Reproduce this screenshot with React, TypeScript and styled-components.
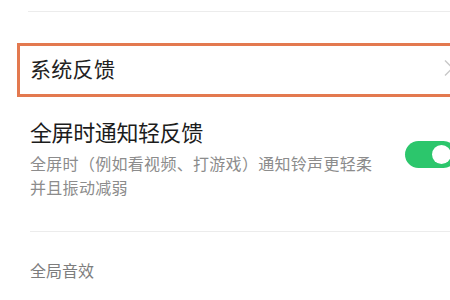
import React from "react";
import styled, { createGlobalStyle } from "styled-components";

const GlobalStyle = createGlobalStyle`
    html, body {
        margin: 0;
        padding: 0;
        background: #ffffff;
        overflow: hidden;
    }
    body {
        font-family: "Noto Sans CJK SC", "Noto Sans", sans-serif;
    }
`;

const Screen = styled.div`
    width: 450px;
    height: 300px;
    display: flex;
    flex-direction: column;
    background: #ffffff;
    overflow: hidden;
`;

const Divider = styled.div<{ $inset: number; $top: number }>`
    height: 1px;
    background: #ececec;
    margin-left: ${p => p.$inset}px;
    margin-top: ${p => p.$top}px;
`;

const FocusRow = styled.div`
    margin-top: 31px;
    margin-left: 17px;
    margin-right: -10px;
    height: 54px;
    box-sizing: border-box;
    border: 3px solid #e3794f;
    display: flex;
    align-items: center;
    justify-content: space-between;
    padding: 0 2px 5px 10px;
`;

const RowLabel = styled.span`
    font-size: 21px;
    line-height: 28px;
    color: #222222;
    letter-spacing: 0.3px;
`;

const Chevron = styled.svg`
    width: 12px;
    height: 18px;
    flex-shrink: 0;
`;

const SwitchRow = styled.div`
    margin-top: 19px;
    display: flex;
    align-items: flex-start;
    justify-content: space-between;
    padding-left: 30px;
`;

const SwitchText = styled.div`
    display: flex;
    flex-direction: column;
`;

const Title = styled.div`
    font-size: 22px;
    line-height: 30px;
    color: #1c1c1c;
    letter-spacing: -0.4px;
`;

const Subtitle = styled.div`
    margin-top: 5px;
    width: 350px;
    font-size: 16px;
    line-height: 24px;
    color: #8c8c8c;
    letter-spacing: 0.3px;
`;

const Switch = styled.div<{ $on: boolean }>`
    margin-top: 25px;
    width: 52px;
    height: 27px;
    flex-shrink: 0;
    border-radius: 14px;
    background: ${p => (p.$on ? "#2cc66c" : "#d9d9d9")};
    display: flex;
    align-items: center;
    justify-content: ${p => (p.$on ? "flex-end" : "flex-start")};
    padding: 0 6px;
    box-sizing: border-box;
    margin-right: -7px;
`;

const Knob = styled.div`
    width: 19px;
    height: 19px;
    border-radius: 50%;
    background: #ffffff;
`;

const SectionHeader = styled.div`
    margin-top: 26px;
    padding-left: 30px;
    font-size: 16px;
    line-height: 24px;
    color: #7d7d7d;
`;

export default function App() {
    return (
        <>
            <GlobalStyle />
            <Screen>
                <Divider $inset={28} $top={11} />
                <FocusRow>
                    <RowLabel>系统反馈</RowLabel>
                    <Chevron viewBox="0 0 12 18">
                        <path d="M2 1.5 L9.5 9 L2 16.5" fill="none" stroke="#c8c8c8" strokeWidth="1.4" />
                    </Chevron>
                </FocusRow>
                <SwitchRow>
                    <SwitchText>
                        <Title>全屏时通知轻反馈</Title>
                        <Subtitle>
                            全屏时（例如看视频、打游戏）通知铃声更轻柔
                            <br />
                            并且振动减弱
                        </Subtitle>
                    </SwitchText>
                    <Switch $on>
                        <Knob />
                    </Switch>
                </SwitchRow>
                <Divider $inset={30} $top={32} />
                <SectionHeader>全局音效</SectionHeader>
            </Screen>
        </>
    );
}
